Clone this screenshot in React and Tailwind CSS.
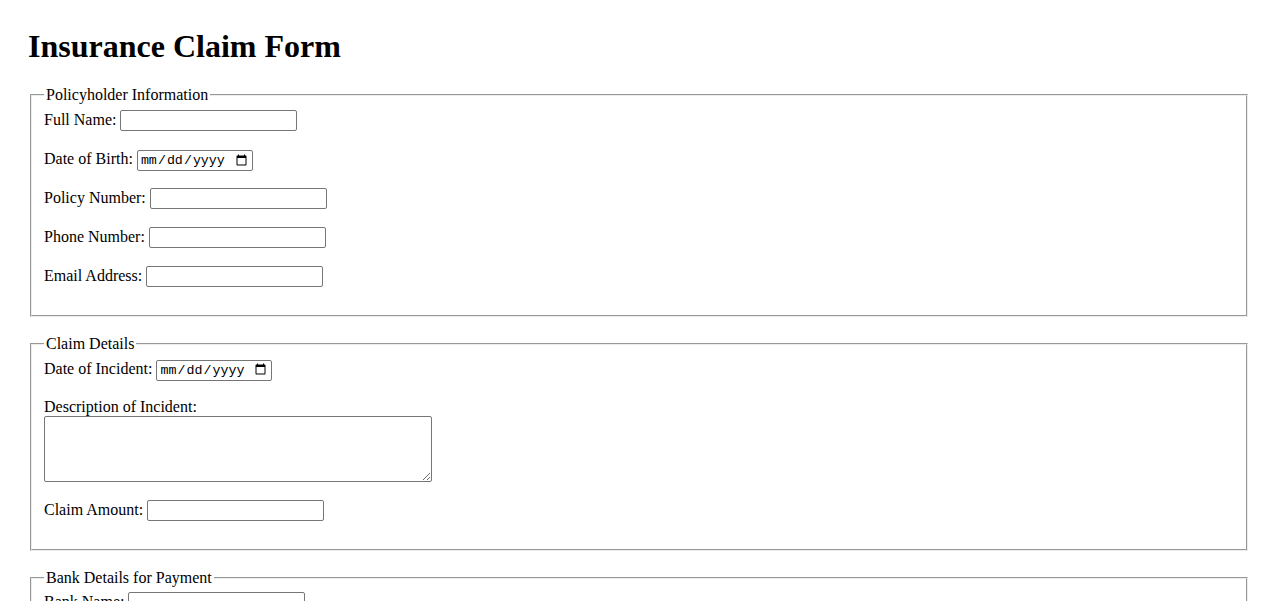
import React from 'react';

const inputCls =
    "w-[177px] h-[21px] border border-[#767676] rounded-[2px] px-[2px] py-[1px] bg-white text-[13.33px] font-['Liberation_Sans',Arial,sans-serif]";
const dateCls =
    "w-[116px] h-[21px] border border-[#767676] rounded-[2px] px-[2px] py-[1px] bg-white text-[13.33px] font-['Liberation_Mono',monospace]";

const Field = ({ label, type = 'text', id }) => (
    <div className={type === 'date' ? "flex items-baseline gap-[4px] pt-[1px] mb-[17px]" : "flex items-baseline gap-[4px] mb-[18px]"}>
        <label htmlFor={id}>{label}</label>
        <input id={id} type={type} className={type === 'date' ? dateCls : inputCls} />
    </div>
);

const Section = ({ title, children }) => (
    <fieldset className="mx-[2px] mb-[18px] border-2 [border-style:groove] border-[#ececec] px-3 pt-[5.6px] pb-[10px]">
        <legend className="px-[2px]">{title}</legend>
        {children}
    </fieldset>
);

const App = () => {
    return (
        <div className="min-h-screen bg-white text-black px-[28px] pt-[28px] pb-8 text-[16px] leading-[normal] font-['Liberation_Serif','Times_New_Roman',serif]">
            <h1 className="text-[32px] font-bold leading-[normal] mb-[21.44px]">Insurance Claim Form</h1>

            <form onSubmit={(e) => e.preventDefault()}>
                {/* Policyholder */}
                <Section title="Policyholder Information">
                    <Field id="fullName" label="Full Name:" />
                    <Field id="dob" label="Date of Birth:" type="date" />
                    <Field id="policyNumber" label="Policy Number:" />
                    <Field id="phone" label="Phone Number:" type="tel" />
                    <Field id="email" label="Email Address:" type="email" />
                </Section>

                {/* Claim */}
                <Section title="Claim Details">
                    <Field id="incidentDate" label="Date of Incident:" type="date" />
                    <div className="mb-[18px]">
                        <label htmlFor="description" className="block">Description of Incident:</label>
                        <textarea
                            id="description"
                            className="block w-[388px] h-[66px] border border-[#767676] rounded-[2px] p-[2px] bg-white text-[13.33px] font-['Liberation_Mono',monospace] resize"
                        />
                    </div>
                    <Field id="claimAmount" label="Claim Amount:" type="number" />
                </Section>

                {/* Bank */}
                <Section title="Bank Details for Payment">
                    <Field id="bankName" label="Bank Name:" />
                    <Field id="accountNumber" label="Account Number:" />
                    <Field id="routingNumber" label="Routing Number:" />
                </Section>

                <button type="submit" className="border border-[#767676] rounded-[2px] bg-[#efefef] px-[6px] py-[1px] text-[13.33px] font-['Liberation_Sans',Arial,sans-serif]">
                    Submit Claim
                </button>
            </form>
        </div>
    );
};

export default App;
